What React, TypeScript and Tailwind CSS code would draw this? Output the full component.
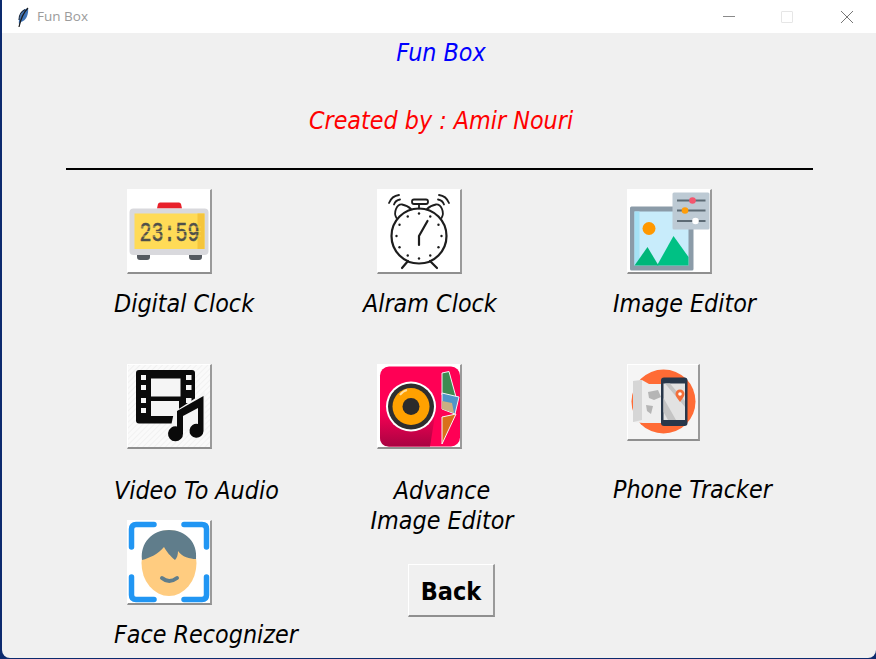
const labelFont = "font-['DejaVu_Sans',sans-serif] [font-stretch:condensed] italic text-[24.800px] leading-[30px] text-black whitespace-nowrap";

const Feather = () => (
  <svg width="14" height="22" viewBox="0 0 14 22">
    <path d="M3 19 C2 12 5 4 12 2 C13 8 10 15 5 16 Z" fill="#3f74b8" />
    <path d="M12 2 C8 6 5 11 3 21" fill="none" stroke="#1a1a1a" strokeWidth="1.2" />
    <path d="M3 14 C3 9 6 5 9 3.5" fill="none" stroke="#16263d" strokeWidth="1.2" />
  </svg>
);

const ClockIcon = () => (
  <svg width="82" height="82" viewBox="0 0 82 82">
    <path d="M29 18.5 L30 14 Q30.500 12.500 32 12.500 H51 Q52.500 12.500 53 14 L54 18.500 Z" fill="#e8202a" />
    <rect x="1.500" y="18.500" width="79" height="46.500" rx="4" fill="#d9d9dd" />
    <path d="M9 65 H22 V67 Q22 70 19 70 H12 Q9 70 9 67 Z M61 65 H74 V67 Q74 70 71 70 H64 Q61 70 61 67 Z" fill="#555a60" />
    <rect x="6.500" y="23.500" width="70" height="35.500" fill="#ffdb57" />
    <rect x="69.500" y="23.500" width="7" height="35.500" fill="#f5c53c" />
    <text transform="translate(41.500 50.500) scale(1 1.400)" textAnchor="middle" fontFamily="'Liberation Mono',monospace" fontSize="20" fill="#4f4f4a" stroke="#4f4f4a" strokeWidth="0.400">23:59</text>
    <path d="M10 41.500 H73 M10 37 H73 M10 46 H73" stroke="#ffdb57" strokeWidth="0.700" />
  </svg>
);

const AlarmIcon = () => {
  const ticks = Array.from({ length: 12 }, (_, i) => (i * Math.PI) / 6);
  return (
    <svg width="82" height="82" viewBox="0 0 82 82" fill="none" stroke="#1d1d1d" strokeWidth="1.800" strokeLinecap="round">
      <circle cx="41" cy="46" r="27.500" strokeWidth="2.200" />
      {ticks.map((a, i) => (
        <circle key={i} cx={41 + 22.500 * Math.sin(a)} cy={46 - 22.500 * Math.cos(a)} r="1.200" fill="#1d1d1d" stroke="none" />
      ))}
      <path d="M41 55 V46 L49.500 31" strokeWidth="2.200" />
      <rect x="34" y="9.500" width="16" height="4.500" rx="2" />
      <path d="M41 14 V18.500" />
      <path d="M18.500 28 C15 22 19 14 24 14.500 C27 15 31 17 33 19" />
      <path d="M63.500 28 C67 22 63 14 58 14.500 C55 15 51 17 49 19" />
      <path d="M11 13 C13 8 17 5.500 21 5 M16 14.500 C17 11.500 19 10 22 9.500" />
      <path d="M71 13 C69 8 65 5.500 61 5 M66 14.500 C65 11.500 63 10 60 9.500" />
      <path d="M30 71 L24 78 M52 71 L59 78" strokeWidth="2.200" />
    </svg>
  );
};

const ImageEditorIcon = () => (
  <svg width="82" height="82" viewBox="0 0 82 82">
    <rect x="2" y="16.500" width="63.500" height="64" rx="1.500" fill="#8b9ba8" />
    <rect x="6.500" y="21.500" width="54" height="54" fill="#c8ecfb" />
    <rect x="6.500" y="21.500" width="5" height="54" fill="#a5e2f6" />
    <circle cx="21" cy="38.500" r="6.500" fill="#ff9800" />
    <path d="M6.500 75.500 L19.500 57 L30.500 75.500 Z" fill="#00b679" />
    <path d="M29 75.500 L45.500 46 L60.500 67 V75.500 Z" fill="#00c184" />
    <rect x="44.500" y="2.500" width="37" height="37" rx="1.500" fill="#bdcad4" />
    <path d="M49 10.500 H77.500 M49 20.500 H77.500 M49 31 H77.500" stroke="#5d6b75" strokeWidth="1.800" />
    <circle cx="64.500" cy="10.500" r="3.300" fill="#f4566e" />
    <circle cx="57" cy="20.500" r="3.300" fill="#ff9d0a" />
    <circle cx="67.500" cy="31" r="3.300" fill="#ffffff" />
  </svg>
);

const VideoIcon = () => {
  const holes = [10, 20, 33, 43];
  return (
    <svg width="82" height="82" viewBox="0 0 82 82">
      <defs>
        <pattern id="hatch" width="4" height="4" patternUnits="userSpaceOnUse" patternTransform="rotate(-45)">
          <rect width="4" height="4" fill="#fafafa" />
          <rect width="4" height="1" fill="#f1f1f1" />
        </pattern>
      </defs>
      <rect width="82" height="82" fill="url(#hatch)" />
      <rect x="8" y="5" width="59" height="53.500" rx="3" fill="#0a0a0a" />
      {holes.map((y) => (
        <g key={y} fill="#f5f5f5">
          <rect x="13" y={y} width="5" height="5" />
          <rect x="58" y={y} width="5.500" height="5" />
        </g>
      ))}
      <rect x="23" y="13.500" width="29.500" height="18" fill="#f5f5f5" />
      <rect x="23" y="36" width="28" height="15" fill="#f5f5f5" />
      <path d="M46 47 L77 27 V66 H42 Z" fill="#f5f5f5" />
      <path d="M49 46 L75.500 31 V66 A7 7 0 1 1 70 59 V43 L55 51 V68.500 A7.500 7.500 0 1 1 49 61.500 Z" fill="#0a0a0a" />
    </svg>
  );
};

const AdvanceIcon = () => (
  <svg width="82" height="82" viewBox="0 0 82 82">
    <defs>
      <linearGradient id="shade" x1="0" y1="0" x2="0" y2="1">
        <stop offset="0" stopColor="#ff0055" />
        <stop offset="1" stopColor="#a90342" />
      </linearGradient>
    </defs>
    <rect x="2" y="1.500" width="80" height="80" rx="9" fill="#ff0055" />
    <path d="M2 44 L58 44 L52 81.500 H11 Q2 81.500 2 72.500 Z" fill="url(#shade)" />
    <circle cx="33" cy="41.500" r="25" fill="#ffffff" />
    <circle cx="33" cy="41.500" r="23" fill="#2e2e2e" />
    <circle cx="33" cy="41.500" r="18.500" fill="#ffa100" />
    <circle cx="33" cy="41.500" r="8.500" fill="#2b2b2b" />
    <path d="M22 30 Q25 26 29 25" stroke="#ffe0a0" strokeWidth="2" fill="none" />
    <path d="M64 8 L71 6.500 L78 32 L64 30 Z" fill="#3f8a52" stroke="#f5f5f5" strokeWidth="1" />
    <path d="M64 28 L81 32 L77 49 L64 44 Z" fill="#4f95c8" stroke="#f5f5f5" strokeWidth="1" />
    <path d="M64 36 L74 38 L76 48 L64 44 Z" fill="#c9b083" />
    <path d="M64 52 L78 49 L64 79 Z" fill="#d9701a" stroke="#f5f5f5" strokeWidth="1" />
  </svg>
);

const PhoneIcon = () => (
  <svg width="70" height="74" viewBox="0 0 70 74">
    <circle cx="35.500" cy="36.500" r="32" fill="#ff6b35" />
    <path d="M5 16 L14 15 L21 19 H40 V58 H15 L5 57 Z" fill="#eeeeee" />
    <path d="M5 16 L14 15 V55 L5 57 Z" fill="#d6d6d6" />
    <path d="M20 27 L30 25 L33 32 L26 35 L21 33 Z M18 40 L25 41 L23 49 L19 46 Z" fill="#b5b5b5" />
    <rect x="33" y="12.500" width="26.500" height="48.500" rx="3" fill="#28374a" />
    <rect x="35.500" y="18.500" width="21.500" height="36.500" fill="#e2e2e2" />
    <path d="M35.500 33 L48 55 H40 L35.500 47 Z M42 18.500 L57 36 V42 L37 18.500 Z" fill="#c4c4c4" />
    <path d="M52 37 C49 33 47.500 31 47.500 29 A4.500 4.500 0 0 1 56.500 29 C56.500 31 55 33 52 37 Z" fill="#f36f3a" />
    <circle cx="52" cy="29" r="1.800" fill="#ffffff" />
  </svg>
);

const FaceIcon = () => (
  <svg width="82" height="82" viewBox="0 0 82 82">
    <ellipse cx="41" cy="42" rx="27.500" ry="33" fill="#ffcc80" />
    <path d="M14 39 C12 22 24 9 41 9 C58 9 70 22 68 38 C62 38 54 36 50 30 C50 34 49 37 47 39 C43 36 38 30 36 26 C30 33 22 37 14 39 Z" fill="#607d8b" />
    <path d="M34 57 Q41 63 49 57" fill="none" stroke="#607d8b" strokeWidth="4" strokeLinecap="round" />
    <path d="M3.500 26 V8 Q3.500 3.500 8 3.500 H26 M56 3.500 H74 Q78.500 3.500 78.500 8 V26 M3.500 56 V74 Q3.500 78.500 8 78.500 H26 M56 78.500 H74 Q78.500 78.500 78.500 74 V56" fill="none" stroke="#2196f3" strokeWidth="5.500" strokeLinecap="round" />
  </svg>
);

const Tile = ({ children, bg = "bg-white" }: { children: React.ReactNode; bg?: string }) => (
  <div className={`w-fit border-t border-l border-white border-r-2 border-b-2 border-r-[#9a9a9a] border-b-[#8f8f8f] ${bg}`}>
    {children}
  </div>
);

export default function App() {
  return (
    <div className="w-[876px] h-[659px] overflow-hidden bg-[#0c2a6e] pl-[2px] pb-[1px] font-['Open_Sans',sans-serif]">
      <div className="h-full rounded-b-lg bg-[#f0f0f0] overflow-hidden">
        <div className="h-[33px] bg-white flex items-center">
          <div className="ml-[14px] mr-[7px] flex">
            <Feather />
          </div>
          <span className="text-[13.500px] text-[#9b9b9b]">Fun Box</span>
          <div className="ml-auto flex items-center">
            <div className="w-[12px] h-[1px] bg-[#8a8a8a] mr-[46px]" />
            <div className="w-[12px] h-[12px] border border-[#e6e6e6] rounded-[1px] mr-[47px]" />
            <svg width="14" height="14" viewBox="0 0 14 14" className="mr-[22px]">
              <path d="M1 1 L13 13 M13 1 L1 13" stroke="#777777" strokeWidth="1" />
            </svg>
          </div>
        </div>

        <div className="text-center pl-[4px]">
          <div className="font-['DejaVu_Sans',sans-serif] [font-stretch:condensed] italic text-[24.800px] leading-[30px] text-[#0000ff] mt-[5px]">Fun Box</div>
          <div className="font-['DejaVu_Sans',sans-serif] [font-stretch:condensed] italic text-[24.800px] leading-[30px] text-[#ff0000] mt-[38px]">Created by : Amir Nouri</div>
        </div>
        <div className="h-[2px] bg-black ml-[64px] w-[747px] mt-[32px]" />

        <div className="flex pl-[125px] mt-[19px]">
          <div className="w-[250px] flex flex-col">
            <Tile><ClockIcon /></Tile>
            <div className={`${labelFont} -ml-[13px] mt-[15px]`}>Digital Clock</div>
            <div className="mt-[45px]">
              <Tile><VideoIcon /></Tile>
            </div>
            <div className={`${labelFont} -ml-[13px] mt-[27px]`}>Video To Audio</div>
            <div className="mt-[14px]">
              <Tile><FaceIcon /></Tile>
            </div>
            <div className={`${labelFont} -ml-[13px] mt-[15px]`}>Face Recognizer</div>
          </div>

          <div className="w-[250px] flex flex-col">
            <Tile><AlarmIcon /></Tile>
            <div className={`${labelFont} -ml-[14px] mt-[15px]`}>Alram Clock</div>
            <div className="mt-[45px]">
              <Tile><AdvanceIcon /></Tile>
            </div>
            <div className={`${labelFont} w-[160px] -ml-[15px] mt-[27px] text-center`}>
              Advance
              <br />
              Image Editor
            </div>
            <button className="w-[87px] h-[53px] ml-[31px] mt-[28px] pt-[3px] bg-[#f0f0f0] border-t border-l border-white border-r-2 border-b-2 border-r-[#9a9a9a] border-b-[#8f8f8f] font-['DejaVu_Sans',sans-serif] [font-stretch:condensed] text-[25px] font-bold text-black">
              Back
            </button>
          </div>

          <div className="flex flex-col">
            <Tile><ImageEditorIcon /></Tile>
            <div className={`${labelFont} -ml-[14px] mt-[15px]`}>Image Editor</div>
            <div className="mt-[45px]">
              <Tile bg="bg-[#f5f5f5]"><PhoneIcon /></Tile>
            </div>
            <div className={`${labelFont} -ml-[14px] mt-[34px]`}>Phone Tracker</div>
          </div>
        </div>
      </div>
    </div>
  );
}
